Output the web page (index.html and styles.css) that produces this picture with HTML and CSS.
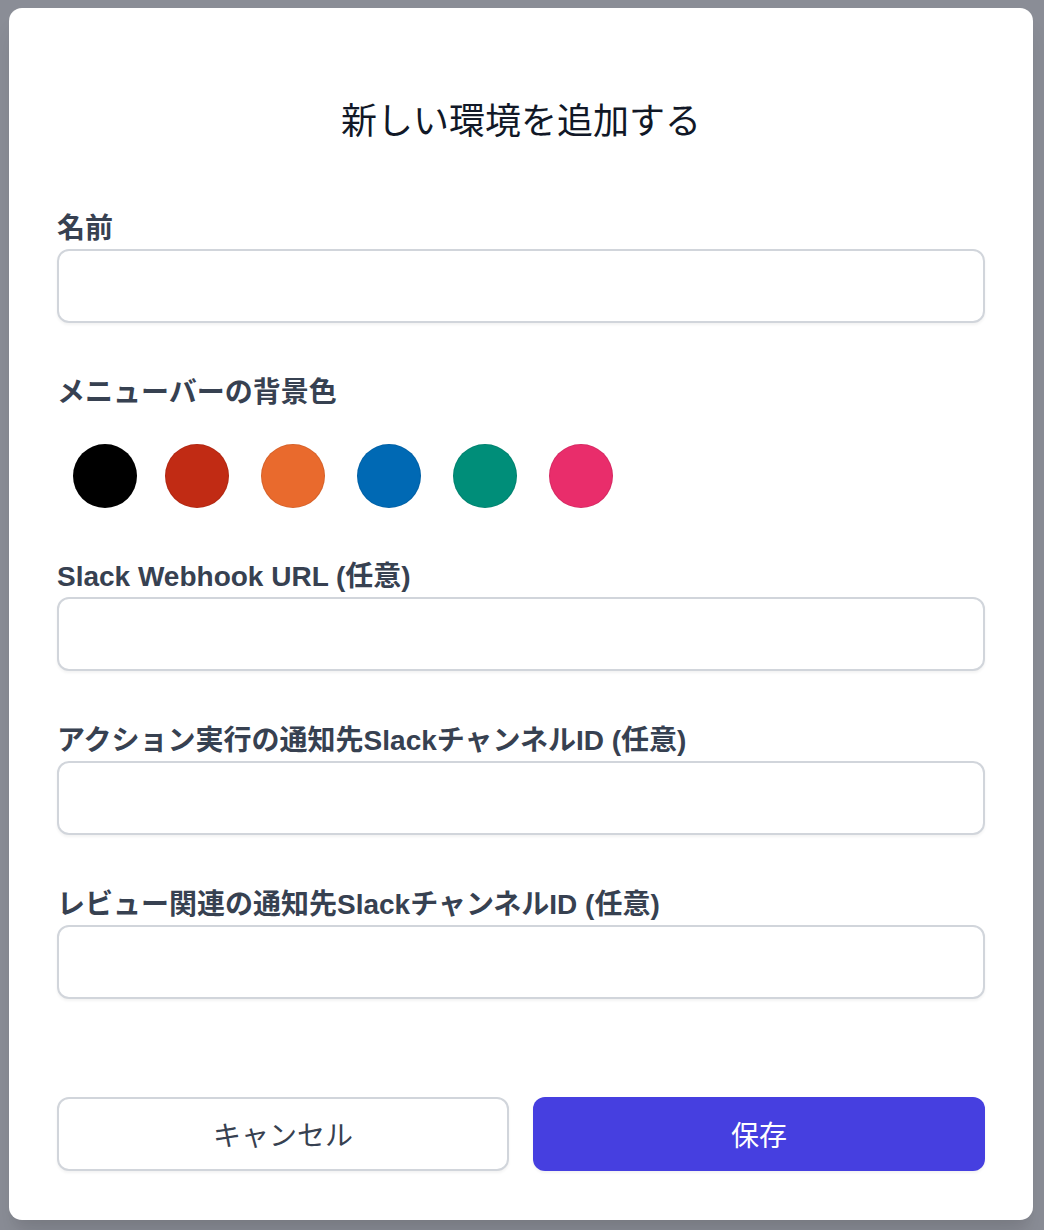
FILE: index.html
```html
<!DOCTYPE html>
<html lang="ja">
<head>
<meta charset="utf-8">
<title>新しい環境を追加する</title>
<link rel="stylesheet" href="styles.css">
</head>
<body>
<div class="backdrop">
  <div class="modal">
    <h1 class="modal-title">新しい環境を追加する</h1>
    <form class="form">
      <div class="field field-first">
        <label class="label">名前</label>
        <input class="input" type="text">
      </div>
      <div class="field">
        <label class="label">メニューバーの背景色</label>
        <div class="swatches">
          <span class="swatch swatch-black"></span>
          <span class="swatch swatch-red"></span>
          <span class="swatch swatch-orange"></span>
          <span class="swatch swatch-blue"></span>
          <span class="swatch swatch-green"></span>
          <span class="swatch swatch-pink"></span>
        </div>
      </div>
      <div class="field field-after-swatches">
        <label class="label">Slack Webhook URL (任意)</label>
        <input class="input" type="text">
      </div>
      <div class="field">
        <label class="label">アクション実行の通知先SlackチャンネルID (任意)</label>
        <input class="input" type="text">
      </div>
      <div class="field">
        <label class="label">レビュー関連の通知先SlackチャンネルID (任意)</label>
        <input class="input" type="text">
      </div>
      <div class="actions">
        <button type="button" class="btn btn-cancel">キャンセル</button>
        <button type="button" class="btn btn-save">保存</button>
      </div>
    </form>
  </div>
</div>
</body>
</html>
```
FILE: styles.css
```css
* { box-sizing: border-box; }
html, body {
  margin: 0;
  padding: 0;
  background: #8a8d96;
}
body {
  font-family: "Liberation Sans", "Noto Sans CJK JP", sans-serif;
}
.backdrop {
  padding: 8px 11px 10px 9px;
  min-height: 1230px;
}
.modal {
  background: #ffffff;
  border-radius: 13px;
  height: 1212px;
  padding: 82px 48px 49px 48px;
  box-shadow: 0 20px 25px -5px rgba(0,0,0,0.10), 0 10px 10px -5px rgba(0,0,0,0.04);
  display: flex;
  flex-direction: column;
}
.modal-title {
  margin: 0;
  font-family: "Noto Sans CJK JP", sans-serif;
  font-weight: 400;
  font-size: 36px;
  line-height: 56px;
  height: 56px;
  color: #111827;
  text-align: center;
}
.form {
  display: flex;
  flex-direction: column;
  flex: 1;
}
.field {
  margin-top: 52px;
  display: flex;
  flex-direction: column;
}
.field-after-swatches {
  margin-top: 51px;
}
.field-first {
  margin-top: 65px;
}
.label {
  font-size: 28px;
  font-weight: 700;
  line-height: 36px;
  height: 36px;
  color: #374151;
  margin-bottom: 2px;
}
.input {
  height: 74px;
  width: 100%;
  border: 2px solid #d1d5db;
  border-radius: 12px;
  background: #fff;
  box-shadow: 0 2px 3px rgba(0,0,0,0.05);
  font-size: 28px;
  padding: 0 20px;
}
.swatches {
  display: flex;
  gap: 32px;
  padding-left: 16px;
  margin-top: 31px;
}
.swatch {
  width: 64px;
  height: 64px;
  border-radius: 50%;
  display: block;
  border: 1px solid rgba(0,0,0,0.08);
}
.swatch-black { background: #000000; margin-right: -4px; }
.swatch-red { background: #c12b14; }
.swatch-orange { background: #e96a2d; }
.swatch-blue { background: #0069b4; }
.swatch-green { background: #008e79; }
.swatch-pink { background: #e92d6b; }
.actions {
  margin-top: auto;
  display: grid;
  grid-template-columns: 1fr 1fr;
  gap: 24px;
}
.btn {
  height: 74px;
  border-radius: 12px;
  font-family: "Noto Sans CJK JP", sans-serif;
  font-size: 28px;
  font-weight: 400;
  cursor: pointer;
}
.btn-cancel {
  background: #ffffff;
  border: 2px solid #d1d5db;
  color: #374151;
  box-shadow: 0 2px 3px rgba(0,0,0,0.05);
}
.btn-save {
  background: #463fe0;
  border: none;
  color: #ffffff;
  box-shadow: 0 2px 3px rgba(0,0,0,0.05);
}
```
